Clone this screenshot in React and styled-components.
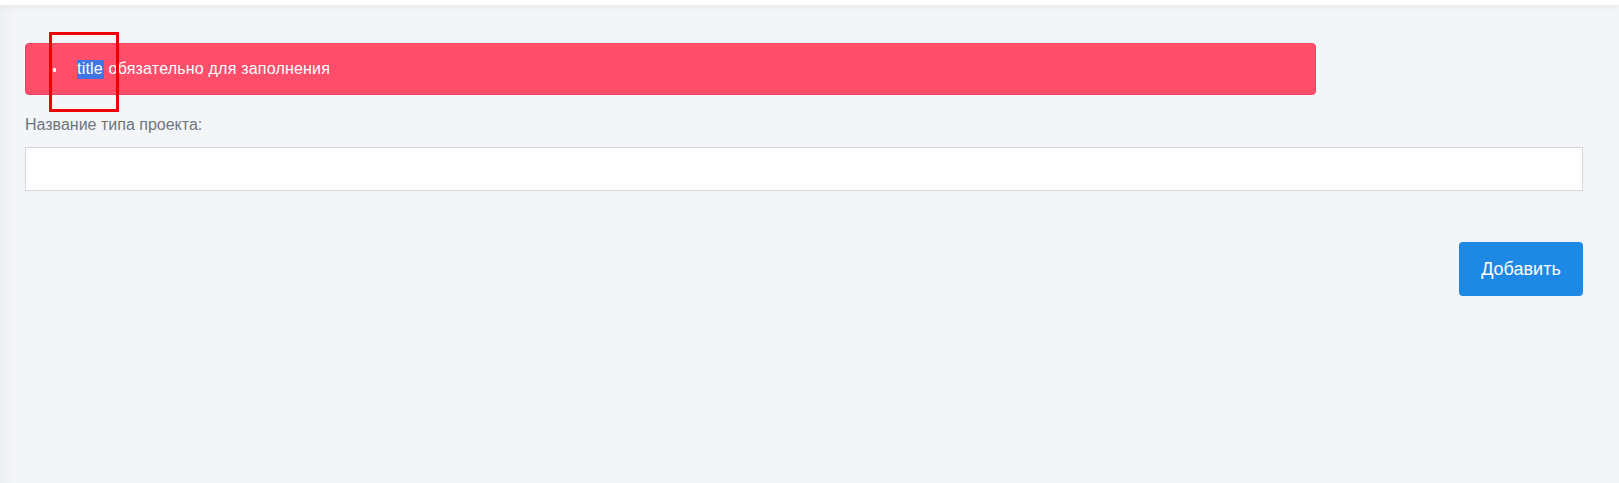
import styled, { createGlobalStyle } from 'styled-components';

const GlobalStyle = createGlobalStyle`
    html, body {
        margin: 0;
        padding: 0;
        background: #f4f5f9;
        font-family: "Liberation Sans", Arial, sans-serif;
    }
`;

const Page = styled.div`
    position: relative;
    min-height: 483px;
    background: #f4f5f9;
    box-sizing: border-box;
`;

const TopBar = styled.div`
    height: 5px;
    background: #ffffff;
    box-shadow: 0 2px 6px rgba(0, 0, 0, 0.06);
`;

const SideShadow = styled.div`
    position: absolute;
    top: 5px;
    left: 0;
    bottom: 0;
    width: 15px;
    background: linear-gradient(to right, rgba(0, 0, 0, 0.025), rgba(0, 0, 0, 0));
`;

const Content = styled.div`
    padding: 38px 36px 0 25px;
    display: flex;
    flex-direction: column;
`;

const Alert = styled.div`
    width: 1291px;
    height: 52px;
    box-sizing: border-box;
    background: #ff4d6a;
    border: 1px solid #f0435f;
    border-radius: 4px;
    color: #ffffff;
    display: flex;
    align-items: center;
`;

const ErrorList = styled.ul`
    margin: 0;
    padding: 0 0 0 51px;
    font-size: 16px;
    line-height: 24px;
    list-style: none;
`;

const ErrorItem = styled.li`
    position: relative;
    letter-spacing: 0.2px;

    &::before {
        content: "";
        position: absolute;
        left: -24px;
        top: 11px;
        width: 3px;
        height: 4px;
        border-radius: 1px;
        background: #ffffff;
    }
`;

const Highlight = styled.span`
    background: #3f76e6;
    color: #ffffff;
    padding: 0 1px 2px 0;
`;

const Label = styled.label`
    margin-top: 21px;
    font-size: 16px;
    line-height: 18px;
    color: #6c757d;
`;

const Input = styled.input`
    margin-top: 13px;
    height: 44px;
    box-sizing: border-box;
    border: 1px solid #d5d8de;
    background: #ffffff;
    outline: none;
    font-family: inherit;
    font-size: 15px;
    padding: 0 12px;
`;

const Actions = styled.div`
    display: flex;
    justify-content: flex-end;
    margin-top: 51px;
`;

const Button = styled.button`
    width: 124px;
    height: 54px;
    border: none;
    border-radius: 4px;
    background: #1e88e5;
    color: #ffffff;
    font-family: inherit;
    font-size: 18px;
`;

const Annotation = styled.div`
    position: absolute;
    left: 49px;
    top: 32px;
    width: 70px;
    height: 80px;
    box-sizing: border-box;
    border: 3px solid #f00000;
`;

const App = () => {
    return (
        <Page>
            <GlobalStyle />
            <TopBar />
            <SideShadow />
            <Content>
                <Alert>
                    <ErrorList>
                        <ErrorItem><Highlight>title</Highlight> обязательно для заполнения</ErrorItem>
                    </ErrorList>
                </Alert>
                <Label>Название типа проекта:</Label>
                <Input type="text" />
                <Actions>
                    <Button>Добавить</Button>
                </Actions>
            </Content>
            <Annotation />
        </Page>
    );
};

export default App;
